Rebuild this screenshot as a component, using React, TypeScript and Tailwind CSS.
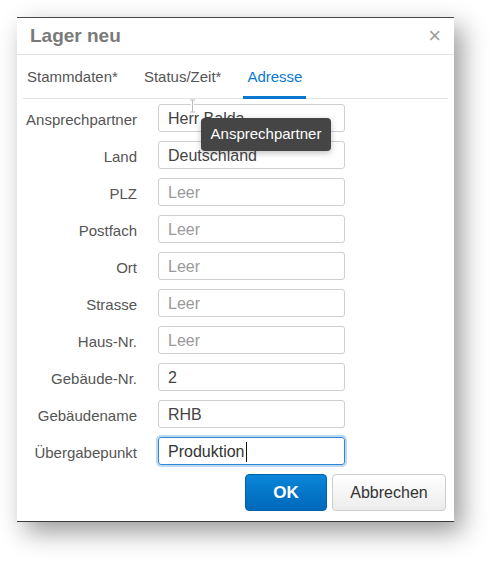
import React from 'react'

const fields: { label: string; value?: string; focused?: boolean }[] = [
  { label: 'Ansprechpartner', value: 'Herr Balda' },
  { label: 'Land', value: 'Deutschland' },
  { label: 'PLZ' },
  { label: 'Postfach' },
  { label: 'Ort' },
  { label: 'Strasse' },
  { label: 'Haus-Nr.' },
  { label: 'Gebäude-Nr.', value: '2' },
  { label: 'Gebäudename', value: 'RHB' },
  { label: 'Übergabepunkt', value: 'Produktion', focused: true },
]

const tabs = [
  { name: 'Stammdaten*', active: false },
  { name: 'Status/Zeit*', active: false },
  { name: 'Adresse', active: true },
]

function Field({ label, value, focused }: { label: string; value?: string; focused?: boolean }) {
  return (
    <div className="flex h-[28px] items-center gap-[21px]">
      <div className="w-[120px] translate-y-[2px] text-right text-[15px] leading-[28px] text-[#555]">{label}</div>
      <div
        className={
          focused
            ? 'flex h-[28px] w-[187px] items-center rounded-[3px] border border-[#2f86d6] px-[9px] pt-px text-[16px] text-[#333] shadow-[0_0_0_2px_rgba(110,170,230,0.45)]'
            : 'flex h-[28px] w-[187px] items-center rounded-[3px] border border-[#cfcfcf] px-[9px] pt-px text-[16px] text-[#444]'
        }
      >
        {value ? <span>{value}</span> : <span className="text-[#9a9a9a]">Leer</span>}
        {focused && <span className="ml-px inline-block h-[20px] w-px bg-[#111]" />}
      </div>
    </div>
  )
}

export default function App() {
  return (
    <div className="relative h-[571px] w-[502px] bg-white pl-[17px] pt-[17px] font-['Liberation_Sans',Arial,sans-serif]">
      <div className="flex w-[437px] flex-col border-t border-b border-t-[#4a4a4a] border-b-[#3a3a3a] bg-white shadow-[8px_10px_24px_rgba(0,0,0,0.4)]">
        {/* header */}
        <div className="flex h-[37px] items-center justify-between border-b border-[#e3e3e3] pl-[13px] pr-[13px]">
          <span className="text-[19px] font-bold text-[#7a7a7a]">Lager neu</span>
          <span className="text-[22px] leading-none text-[#9d9d9d]">×</span>
        </div>

        {/* tabs */}
        <div className="mx-[6px] flex h-[44px] gap-[18px] border-b border-[#e3e3e3]">
          {tabs.map((t) => (
            <div
              key={t.name}
              className={
                t.active
                  ? '-mb-px flex items-center border-b-[3px] border-[#0a78d0] px-[4px] pt-[4px] text-[15px] text-[#0a78d0]'
                  : '-mb-px flex items-center border-b-[3px] border-transparent px-[4px] pt-[4px] text-[15px] text-[#555]'
              }
            >
              {t.name}
            </div>
          ))}
        </div>

        {/* form */}
        <div className="flex flex-col gap-[9px] pt-[5px]">
          {fields.map((f) => (
            <Field key={f.label} {...f} />
          ))}
        </div>

        {/* actions */}
        <div className="mt-[9px] flex justify-end gap-[5px] pb-[10px] pr-[8px]">
          <button className="h-[37px] w-[82px] rounded-[4px] border border-[#0061a8] bg-gradient-to-b from-[#0b86da] to-[#0068b9] text-[17px] font-bold text-white">
            OK
          </button>
          <button className="h-[37px] w-[114px] rounded-[4px] border border-[#cdcdcd] bg-gradient-to-b from-white to-[#ececec] text-[16px] text-[#333]">
            Abbrechen
          </button>
        </div>
      </div>

      {/* text cursor over first input */}
      <svg className="absolute left-[189px] top-[99px]" width="7" height="14" viewBox="0 0 7 14">
        <path d="M0.5 0.5h2.5v13h-2.5M6.5 0.5h-2.5v13h2.5M3.5 0.5v13" fill="none" stroke="#fff" strokeWidth="2" />
        <path d="M1 1h5M3.5 1v12M1 13h5" fill="none" stroke="#bbb" strokeWidth="1" />
      </svg>

      {/* tooltip */}
      <div className="absolute left-[201px] top-[118px] flex h-[33px] w-[130px] items-center justify-center rounded-[4px] bg-[#454545] text-[15px] text-white shadow-[0_2px_6px_rgba(0,0,0,0.25)]">
        Ansprechpartner
      </div>
    </div>
  )
}
